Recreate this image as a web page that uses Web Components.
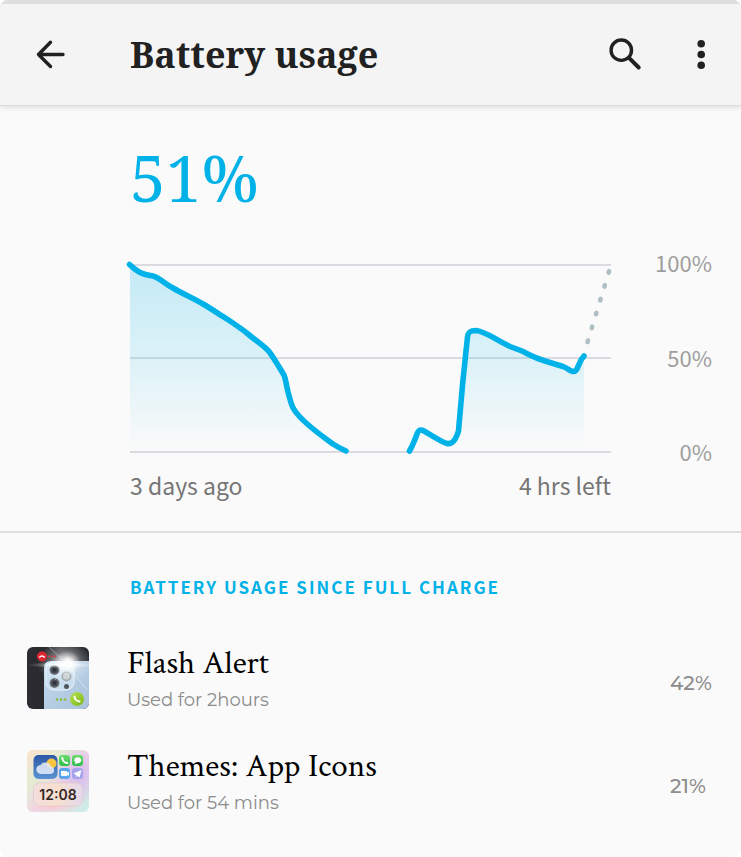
<!DOCTYPE html>
<html lang="en">
<head>
<meta charset="utf-8">
<meta name="viewport" content="width=device-width, initial-scale=1">
<title>Battery usage</title>
<style>
  html, body { margin: 0; min-height: 100%; background: #fff; }
  body {
    --accent: #00b2e7;
    --ink: #212121;
    --muted: #757575;
    --faint: #9e9e9e;
    --gutter: 130px;
    --serif: "Noto Serif", "DejaVu Serif Condensed", "DejaVu Serif", serif;
    --sans: "Noto Sans CJK SC", "Noto Sans", sans-serif;
    --book: "Crimson Text", "Liberation Serif", serif;
    --round: "Montserrat", "Inter", sans-serif;
  }
</style>
</head>
<body>
<battery-screen></battery-screen>

<script>
const define = (name, html) => {
  const template = document.createElement('template');
  template.innerHTML = html;
  customElements.define(name, class extends HTMLElement {
    constructor() {
      super();
      this.attachShadow({ mode: 'open' }).append(template.content.cloneNode(true));
    }
  });
};

customElements.define('icon-button', class extends HTMLElement {
  constructor() {
    super();
    this.attachShadow({ mode: 'open' }).innerHTML = `
      <style>
        :host { display: block; }
        button { display: grid; place-items: center; box-sizing: border-box; width: 48px; height: 48px; padding: 0 0 2px; border: 0; background: none; color: var(--ink); cursor: pointer; }
      </style>
      <button type="button"><slot></slot></button>`;
  }
  connectedCallback() {
    this.shadowRoot.querySelector('button').setAttribute('aria-label', this.getAttribute('label'));
  }
});

define('app-bar', `
  <style>
    :host { display: grid; grid-template-columns: 104px 1fr auto; align-items: center; box-sizing: border-box; height: 106px; padding: 4px 16px 4px 26px; background: #f4f4f4; border-top: 4px solid #dedede; border-bottom: 1px solid #dcdcdc; box-shadow: 0 1px 6px rgba(0,0,0,.14); position: relative; }
    h1 { margin: 0; color: var(--ink); font: bold 36px/48px var(--serif); white-space: nowrap; }
    .actions { display: flex; gap: 28px; }
    svg { display: block; }
  </style>
  <icon-button label="Back">
    <svg width="32" height="32" viewBox="0 0 32 32" fill="none" stroke="currentColor" stroke-width="3.4" stroke-linecap="round" stroke-linejoin="round"><path d="M16.500 4.200 4.500 16.500l12 12M4.500 16.500H29"/></svg>
  </icon-button>
  <h1><slot></slot></h1>
  <div class="actions">
    <icon-button label="Search">
      <svg width="34" height="34" viewBox="0 0 34 34" fill="none" stroke="currentColor" stroke-linecap="round"><circle cx="13.300" cy="13.200" r="10.200" stroke-width="3.400"/><path d="m21.500 21.300 9.200 9.200" stroke-width="4"/></svg>
    </icon-button>
    <icon-button label="More options">
      <svg width="8" height="32" viewBox="0 0 8 32" fill="currentColor"><circle cx="4.200" cy="5.700" r="3.800"/><circle cx="4.200" cy="16.500" r="3.800"/><circle cx="4.200" cy="27.300" r="3.800"/></svg>
    </icon-button>
  </div>`);

define('battery-chart', `
  <style>
    :host { display: grid; grid-template-columns: 1fr 101px; row-gap: 14px; color: var(--muted); }
    svg { display: block; width: 100%; height: auto; overflow: visible; }
    .scale { display: flex; flex-direction: column; justify-content: space-between; margin: -20px 0 -16px; text-align: right; color: var(--faint); font: 22px/36px var(--sans); }
    .range { display: flex; justify-content: space-between; font: 23px/36px var(--sans); }
  </style>
  <svg viewBox="130 264 481 189" role="img" aria-label="Battery level over time" fill="none">
    <defs>
      <linearGradient id="fade" gradientUnits="userSpaceOnUse" x1="0" y1="264" x2="0" y2="452">
        <stop stop-color="#00b2e7" stop-opacity=".22"/><stop offset=".5" stop-color="#00b2e7" stop-opacity=".12"/><stop offset="1" stop-color="#00b2e7" stop-opacity="0"/>
      </linearGradient>
    </defs>
    <path d="M130 265h481M130 358h481M130 452h481" stroke="#dadbe0" stroke-width="2"/>
    <path fill="url(#fade)" d="M130 265C137 271 140 274 153 276 160 278 165 284 173 288 183 294 193 298 203 304 210 308 219 314 227 319 236 325 242 329 248 334 255 340 262 345 268 351.500 274 359 279 368 284 375 286 380 286 384 288 392 291 402 291 406 295 411 304 424 327 439 333 444L346.500 452H130z"/>
    <path fill="url(#fade)" d="M409.500 452 418 431.500C419 429 421 429.500 423 430.500 433 436 441 442 447 443.500 454 445 457 436 458 431L467.500 337C468 332 470 330.500 476 330.500 485 331 496 340 510 346.500L522 351C534 357 535 358 545 361L563 366.500C567 368 569 370 571.500 371 577 373 577 368 579 364.500Q581 359 584 356V452z"/>
    <g stroke="#00b2e7" stroke-width="5.600" stroke-linecap="round" stroke-linejoin="round">
      <path d="M129.500 264.500C137 271 140 274 153 276 160 278 165 284 173 288 183 294 193 298 203 304 210 308 219 314 227 319 236 325 242 329 248 334 255 340 263 345 269 351.500 274 358 279 367 284 375 286 380 286 384 288 392 291 402 291 406 295 411 304 424 325 438 333 444Q339 448 346 451"/>
      <path d="M409.500 451Q413 445 417 434C418.500 430 420 429.500 423 430.500 433 436 441 442 447 443.500 454 445 457 436 458.500 431L462.700 383 467.500 337C468 332 470 330.500 476 330.500 485 331 496 340 510 346.500L522 351C534 357 535 358 545 361L563 366.500C567 368 569 370 571.500 371 577 373 577 368 579 364.500Q581 359 584 356"/>
    </g>
    <path d="M587.500 342 609.300 270.500" stroke="#b0bec5" stroke-width="4.600" stroke-linecap="round" stroke-dasharray="1.500 13" />
  </svg>
  <div class="scale"><span>100%</span><span>50%</span><span>0%</span></div>
  <div class="range"><span>3 days ago</span><span>4 hrs left</span></div>`);

define('flash-alert-icon', `
  <style>:host { display: block; } svg { display: block; width: 62px; height: 62px; }</style>
  <svg viewBox="0 0 62 62" aria-hidden="true">
    <defs>
      <clipPath id="tile"><rect width="62" height="62" rx="6"/></clipPath>
      <linearGradient id="dark" x1="0" y1="0" x2="1" y2="0"><stop stop-color="#2c2d33"/><stop offset=".25" stop-color="#29292e"/><stop offset=".55" stop-color="#4b4c50"/><stop offset="1" stop-color="#24262b"/></linearGradient>
      <linearGradient id="phone" x1="0" y1="0" x2="1" y2="1"><stop stop-color="#c3daee"/><stop offset="1" stop-color="#a9c2da"/></linearGradient>
      <radialGradient id="flare"><stop stop-color="#fff"/><stop offset=".25" stop-color="#fff" stop-opacity=".9"/><stop offset=".55" stop-color="#fff" stop-opacity=".35"/><stop offset="1" stop-color="#fff" stop-opacity="0"/></radialGradient>
      <radialGradient id="lens"><stop stop-color="#23242b"/><stop offset=".6" stop-color="#4d525b"/><stop offset="1" stop-color="#7d838b"/></radialGradient>
      <linearGradient id="green" x1="0" y1="0" x2="1" y2="1"><stop stop-color="#b5e24a"/><stop offset="1" stop-color="#7bb51a"/></linearGradient>
    </defs>
    <g clip-path="url(#tile)">
      <rect width="62" height="62" fill="url(#dark)"/>
      <path d="M17 62V21q0-7 7-7h38v48z" fill="url(#phone)"/>
      <rect x="19" y="15" width="28" height="28" rx="8" fill="#c8deef" stroke="#e7f1f8"/>
      <ellipse cx="38" cy="16" rx="28" ry="20" fill="url(#flare)" opacity=".7"/>
      <circle cx="27.500" cy="23" r="5" fill="url(#lens)"/><circle cx="27.500" cy="36" r="5" fill="url(#lens)"/>
      <circle cx="39.500" cy="29.500" r="5" fill="#a5adb1"/><circle cx="39.500" cy="29" r="3.500" fill="#cfd5d7"/><circle cx="39.500" cy="39.500" r="2.500" fill="#51585d"/>
      <circle cx="41" cy="16" r="13" fill="url(#flare)"/>
      <ellipse cx="36" cy="18" rx="36" ry="3" fill="url(#flare)" opacity=".8"/>
      <path d="m22 0 15 14 23 29M28 33 41 16" stroke="#fff" stroke-width=".7" opacity=".55" fill="none"/>
      <circle cx="15" cy="9.500" r="5" fill="#dd2530"/>
      <path d="M12.300 10.500q2.700-3 5.400 0" stroke="#fff" stroke-width="1.700" fill="none"/>
      <g fill="#dc3b42"><circle cx="22" cy="9.500" r="1"/><circle cx="25" cy="9.500" r="1"/><circle cx="28" cy="9.500" r="1"/></g>
      <g fill="#86bd3a"><circle cx="30" cy="52.500" r="1.300"/><circle cx="34" cy="52.500" r="1.300"/><circle cx="38" cy="52.500" r="1.300"/></g>
      <circle cx="50" cy="52" r="7" fill="url(#green)"/>
      <path d="M47.500 49.500q.5 4.500 5 5" stroke="#fff" stroke-width="2" stroke-linecap="round" fill="none"/>
    </g>
  </svg>`);

define('themes-icon', `
  <style>:host { display: block; } svg { display: block; width: 62px; height: 62px; } text { font: 600 14px Inter, sans-serif; }</style>
  <svg viewBox="0 0 62 62" aria-hidden="true">
    <defs>
      <linearGradient id="bg" x1="0" y1="0" x2="1" y2="1"><stop stop-color="#fbe3cd"/><stop offset=".3" stop-color="#e4ecd4"/><stop offset=".55" stop-color="#f0d5e4"/><stop offset="1" stop-color="#c9efe6"/></linearGradient>
      <radialGradient id="lilac"><stop stop-color="#d7b9f0"/><stop offset="1" stop-color="#d7b9f0" stop-opacity="0"/></radialGradient>
      <radialGradient id="pink"><stop stop-color="#ffc9d2"/><stop offset="1" stop-color="#ffc9d2" stop-opacity="0"/></radialGradient>
      <linearGradient id="sky" x1="0" y1="0" x2="0" y2="1"><stop stop-color="#2b58a6"/><stop offset="1" stop-color="#5c94d4"/></linearGradient>
      <linearGradient id="clock" x1="0" y1="0" x2="1" y2="0"><stop stop-color="#f3dedd"/><stop offset=".5" stop-color="#f8dfcf"/><stop offset="1" stop-color="#e5d8ed"/></linearGradient>
      <linearGradient id="call" x1="0" y1="0" x2="0" y2="1"><stop stop-color="#6ddb6f"/><stop offset="1" stop-color="#2fbd4a"/></linearGradient>
      <clipPath id="tile"><rect width="62" height="62" rx="6"/></clipPath>
    </defs>
    <g clip-path="url(#tile)">
      <rect width="62" height="62" fill="url(#bg)"/>
      <ellipse cx="52" cy="24" rx="26" ry="30" fill="url(#lilac)"/>
      <ellipse cx="26" cy="57" rx="26" ry="5" fill="url(#pink)"/>
    </g>
    <rect x="6.500" y="5" width="24" height="24" rx="5" fill="url(#sky)"/>
    <circle cx="24.500" cy="13.500" r="5" fill="#f7c63e"/>
    <path d="M14 24a4.500 4.500 0 0 1-.5-9 6 6 0 0 1 10.500 1.500 3.800 3.800 0 0 1 0 7.500z" fill="#e1ebf8" opacity=".88"/>
    <rect x="32" y="5" width="11" height="11" rx="3" fill="url(#call)"/>
    <rect x="45" y="5" width="11" height="11" rx="3" fill="url(#call)"/>
    <rect x="32" y="18" width="11" height="11" rx="3" fill="#58a5ee"/>
    <rect x="45" y="18" width="11" height="11" rx="3" fill="#a5a3eb"/>
    <path d="M35.300 8q.5 4.500 5 5" stroke="#fff" stroke-width="2" stroke-linecap="round" fill="none"/>
    <path d="M50.500 7.200c5 0 5 6 0 6l-2.500 1 .5-1.700c-2.500-2-1-5.300 2-5.300z" fill="#fff"/>
    <path d="M34 21h5q1 0 1 1v.7l2-1.200v4.500l-2-1.200V26h-5q-1 0-1-1z" fill="#fff"/>
    <path d="m46.500 23.500 8-3.500-2 7.500-2-1.500-1 1.300-.3-2.300z" fill="#fff"/>
    <rect x="6.500" y="33" width="49" height="23" rx="6" fill="url(#clock)" stroke="#dcc9c8" stroke-width=".7"/>
    <text x="31" y="50" text-anchor="middle" fill="#33261f">12:08</text>
  </svg>`);

define('section-title', `
  <style>
    :host { display: block; }
    h2 { margin: 0; color: var(--accent); font: 700 17px/28px var(--sans); letter-spacing: 2px; text-transform: uppercase; }
  </style>
  <h2><slot></slot></h2>`);

define('usage-row', `
  <style>
    :host { display: grid; grid-template-columns: 62px 1fr 42px; column-gap: 38px; align-items: center; }
    .text { padding-top: 2px; }
    .name { display: block; margin-bottom: 4px; color: #000; font: 33px/38px var(--book); }
    .used { display: block; font: 18px/26px var(--round); color: #8c8c8c; }
    .share { display: block; padding-top: 10px; font: 500 20px/26px var(--round); color: #8c8c8c; white-space: nowrap; }
  </style>
  <slot name="icon"></slot>
  <div class="text"><span class="name"><slot name="name"></slot></span><span class="used"><slot name="used"></slot></span></div>
  <span class="share"><slot name="share"></slot></span>`);

define('battery-screen', `
  <style>
    :host { display: block; min-height: 100vh; box-sizing: border-box; background: #fafafa; border-radius: 8px; overflow: hidden; }
    .summary { padding: 30px 29px 28px var(--gutter); border-bottom: 2px solid #dedede; }
    .level { margin: 0 0 44px; color: var(--accent); font: 64px/84px var(--serif); }
    .usage { padding: 40px 29px 32px 27px; }
    section-title { margin-left: 103px; }
    ul { display: grid; gap: 33px; margin: 42px 0 0; padding: 0; list-style: none; }
  </style>
  <header><app-bar>Battery usage</app-bar></header>
  <main>
    <section class="summary">
      <p class="level">51%</p>
      <battery-chart></battery-chart>
    </section>
    <section class="usage">
      <section-title>Battery usage since full charge</section-title>
      <ul>
        <li><usage-row><flash-alert-icon slot="icon"></flash-alert-icon><span slot="name">Flash Alert</span><span slot="used">Used for 2hours</span><span slot="share">42%</span></usage-row></li>
        <li><usage-row><themes-icon slot="icon"></themes-icon><span slot="name">Themes: App Icons</span><span slot="used">Used for 54 mins</span><span slot="share">21%</span></usage-row></li>
      </ul>
    </section>
  </main>`);
</script>
</body>
</html>
